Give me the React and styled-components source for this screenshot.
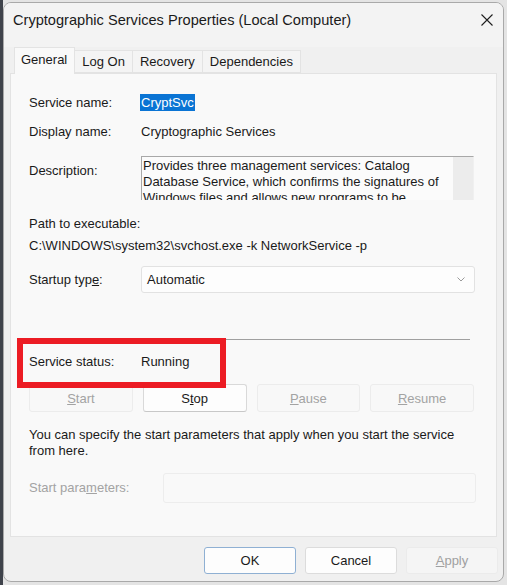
import styled, { createGlobalStyle } from 'styled-components'

const GlobalStyle = createGlobalStyle`
    html, body {
        margin: 0;
        padding: 0;
    }
    body {
        background: linear-gradient(to right, #3f434b 0 3px, #e4e4e4 3px);
        font-family: "Liberation Sans", Arial, sans-serif;
        font-size: 13px;
        color: #1a1a1a;
    }
`

const App = () => {
    return (
        <>
            <GlobalStyle />
            <Window>
                <TitleBar>
                    <Title>Cryptographic Services Properties (Local Computer)</Title>
                    <CloseButton aria-label='Close'>
                        <svg width='12' height='12' viewBox='0 0 12 12'>
                            <path d='M0.5 0.5 L11.5 11.5 M11.5 0.5 L0.5 11.5' stroke='#1f1f1f' strokeWidth='1.1' fill='none' />
                        </svg>
                    </CloseButton>
                </TitleBar>
                <TabStrip>
                    <Tab $active>General</Tab>
                    <Tab>Log On</Tab>
                    <Tab>Recovery</Tab>
                    <Tab>Dependencies</Tab>
                </TabStrip>
                <Panel>
                    <FieldRow $top={21}>
                        <Label>Service name:</Label>
                        <Value><Selected>CryptSvc</Selected></Value>
                    </FieldRow>
                    <FieldRow $top={13}>
                        <Label>Display name:</Label>
                        <Value>Cryptographic Services</Value>
                    </FieldRow>
                    <FieldRow $top={16} $align='start'>
                        <Label $pad={7}>Description:</Label>
                        <DescBox>
                            <DescText>
                                Provides three management services: Catalog Database Service, which confirms the signatures of Windows files and allows new programs to be installed; Protected Root Service, which adds and removes Trusted Root Certification Authority certificates from this computer.
                            </DescText>
                            <ScrollTrack />
                        </DescBox>
                    </FieldRow>
                    <Line $top={16}>Path to executable:</Line>
                    <Line $top={6}>C:\WINDOWS\system32\svchost.exe -k NetworkService -p</Line>
                    <FieldRow $top={12}>
                        <Label>Startup typ<u>e</u>:</Label>
                        <Combo>
                            <span>Automatic</span>
                            <svg width='8' height='5' viewBox='0 0 8 5'>
                                <path d='M0.5 0.5 L4 4 L7.5 0.5' stroke='#9a9a9a' strokeWidth='1' fill='none' />
                            </svg>
                        </Combo>
                    </FieldRow>
                    <Separator />
                    <StatusRow>
                        <Label>Service status:</Label>
                        <Value>Running</Value>
                        <Highlight />
                    </StatusRow>
                    <ButtonRow>
                        <ActionButton disabled><u>S</u>tart</ActionButton>
                        <ActionButton>S<u>t</u>op</ActionButton>
                        <ActionButton disabled><u>P</u>ause</ActionButton>
                        <ActionButton disabled><u>R</u>esume</ActionButton>
                    </ButtonRow>
                    <Info>
                        You can specify the start parameters that apply when you start the service from here.
                    </Info>
                    <ParamsRow>
                        <Label $disabled>Start para<u>m</u>eters:</Label>
                        <ParamInput disabled />
                    </ParamsRow>
                </Panel>
                <Footer>
                    <DialogButton $primary>OK</DialogButton>
                    <DialogButton>Cancel</DialogButton>
                    <DialogButton disabled><u>A</u>pply</DialogButton>
                </Footer>
            </Window>
        </>
    )
}

export default App

const Window = styled.div`
    margin: 2px 0 0 3px;
    width: 501px;
    height: 580px;
    box-sizing: border-box;
    background: #f0f0f0;
    border: 1px solid #a9a9a9;
    border-radius: 8px;
    display: flex;
    flex-direction: column;
    overflow: hidden;
`
const TitleBar = styled.div`
    height: 44px;
    display: flex;
    align-items: flex-start;
    justify-content: space-between;
    padding: 8px 10px 0 9px;
    box-sizing: border-box;
    background: #f3f3f3;
`
const Title = styled.div`
    font-size: 14.6px;
    line-height: 18px;
    color: #1a1a1a;
    white-space: nowrap;
`
const CloseButton = styled.div`
    margin-top: 3px;
    width: 12px;
    height: 12px;
    display: flex;
`
const TabStrip = styled.div`
    display: flex;
    align-items: flex-end;
    height: 26px;
    margin-left: 10px;
    position: relative;
    z-index: 1;
`
const Tab = styled.div`
    box-sizing: border-box;
    height: ${p => p.$active ? '27px' : '23px'};
    margin-bottom: ${p => p.$active ? '-1px' : '0'};
    padding: ${p => p.$active ? '0 7px 3px 6px' : '0 7px'};
    display: flex;
    align-items: center;
    background: ${p => p.$active ? '#f9f9f9' : '#f4f4f4'};
    border: 1px solid #e3e3e3;
    border-bottom: ${p => p.$active ? 'none' : '1px solid #e3e3e3'};
    border-left: ${p => p.$active ? '1px solid #e3e3e3' : 'none'};
    font-size: 13px;
    color: #1a1a1a;
    white-space: nowrap;
`
const Panel = styled.div`
    margin: 0 6px 0 6px;
    height: 464px;
    box-sizing: border-box;
    background: #f9f9f9;
    border: 1px solid #e3e3e3;
    padding: 0 22px 0 18px;
    display: flex;
    flex-direction: column;
`
const FieldRow = styled.div`
    margin-top: ${p => p.$top}px;
    display: grid;
    grid-template-columns: 112px 1fr;
    align-items: ${p => p.$align || 'center'};
`
const Label = styled.div`
    line-height: 16px;
    padding-top: ${p => p.$pad || 0}px;
    color: ${p => p.$disabled ? '#a3a3a3' : '#1a1a1a'};
    white-space: nowrap;
`
const Value = styled.div`
    line-height: 16px;
    white-space: nowrap;
`
const Selected = styled.span`
    background: #0a74d4;
    color: #fff;
    padding: 1px 1px;
    margin-left: -1px;
`
const DescBox = styled.div`
    height: 44px;
    box-sizing: border-box;
    display: flex;
    border-top: 1px solid #a8a8a8;
    border-left: 1px solid #a8a8a8;
    border-right: 1px solid #f0f0f0;
    background: #fbfbfb;
    overflow: hidden;
`
const DescText = styled.div`
    flex: 1;
    padding: 1px 6px 0 1px;
    line-height: 16px;
    color: #1a1a1a;
`
const ScrollTrack = styled.div`
    width: 20px;
    flex: none;
    background: #ececec;
`
const Line = styled.div`
    margin-top: ${p => p.$top}px;
    line-height: 16px;
    white-space: nowrap;
`
const Combo = styled.div`
    height: 27px;
    box-sizing: border-box;
    margin-right: -1px;
    display: flex;
    align-items: center;
    justify-content: space-between;
    padding: 0 9px 0 5px;
    background: #fdfdfd;
    border: 1px solid #e2e2e2;
    border-radius: 3px;
`
const Separator = styled.div`
    margin: 46px 4px 0 0;
    height: 1px;
    background: #a0a0a0;
`
const StatusRow = styled.div`
    position: relative;
    margin-top: 14px;
    display: grid;
    grid-template-columns: 112px 1fr;
    align-items: center;
`
const Highlight = styled.div`
    position: absolute;
    left: -12px;
    top: -16px;
    width: 209px;
    height: 50px;
    box-sizing: border-box;
    border: 6px solid #ec1c24;
    z-index: 2;
`
const ButtonRow = styled.div`
    margin-top: 14px;
    display: grid;
    grid-template-columns: repeat(4, 1fr);
    column-gap: 10px;
`
const ActionButton = styled.div`
    height: 28px;
    box-sizing: border-box;
    display: flex;
    align-items: center;
    justify-content: center;
    font-size: 13px;
    border-radius: 3px;
    background: ${p => p.disabled ? '#f8f8f8' : '#fdfdfd'};
    border: 1px solid ${p => p.disabled ? '#ececec' : '#d9d9d9'};
    border-bottom-color: ${p => p.disabled ? '#ececec' : '#c8c8c8'};
    color: ${p => p.disabled ? '#a3a3a3' : '#1a1a1a'};
`
const Info = styled.div`
    margin-top: 15px;
    line-height: 16px;
    padding-right: 4px;
`
const ParamsRow = styled.div`
    margin-top: 14px;
    display: grid;
    grid-template-columns: 134px 1fr;
    align-items: center;
`
const ParamInput = styled.div`
    height: 30px;
    box-sizing: border-box;
    margin-right: -2px;
    background: #f9f9f9;
    border: 1px solid #ededed;
    border-radius: 3px;
`
const Footer = styled.div`
    display: flex;
    justify-content: flex-end;
    gap: 9px;
    padding: 10px 5px 0 0;
`
const DialogButton = styled.div`
    width: 92px;
    height: 27px;
    box-sizing: border-box;
    display: flex;
    align-items: center;
    justify-content: center;
    font-size: 13px;
    border-radius: 3px;
    background: ${p => p.disabled ? '#f5f5f5' : '#fdfdfd'};
    border: 1px solid ${p => p.$primary ? '#8fb0d3' : p.disabled ? '#ebebeb' : '#dcdcdc'};
    color: ${p => p.disabled ? '#a0a0a0' : '#1a1a1a'};
`
